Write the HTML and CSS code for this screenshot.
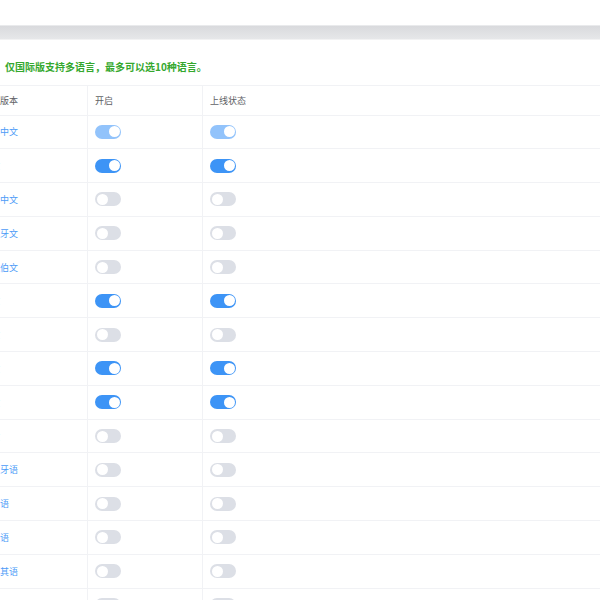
FILE: index.html
```html
<!DOCTYPE html>
<html lang="zh">
<head>
<meta charset="utf-8">
<link rel="stylesheet" href="styles.css">
</head>
<body>
<div class="topbar"></div>
<div class="shade"></div>
<div class="notice">仅国际版支持多语言，最多可以选10种语言。</div>
<div class="table">
  <div class="row head"><div class="cell">语言版本</div><div class="cell">开启</div><div class="cell">上线状态</div></div>
  <div class="row"><div class="cell link">繁体中文</div><div class="cell"><span class="sw on dis"></span></div><div class="cell"><span class="sw on dis"></span></div></div>
  <div class="row"><div class="cell link">英文</div><div class="cell"><span class="sw on"></span></div><div class="cell"><span class="sw on"></span></div></div>
  <div class="row"><div class="cell link">简体中文</div><div class="cell"><span class="sw"></span></div><div class="cell"><span class="sw"></span></div></div>
  <div class="row"><div class="cell link">西班牙文</div><div class="cell"><span class="sw"></span></div><div class="cell"><span class="sw"></span></div></div>
  <div class="row"><div class="cell link">阿拉伯文</div><div class="cell"><span class="sw"></span></div><div class="cell"><span class="sw"></span></div></div>
  <div class="row"><div class="cell link">日文</div><div class="cell"><span class="sw on"></span></div><div class="cell"><span class="sw on"></span></div></div>
  <div class="row"><div class="cell link">韩文</div><div class="cell"><span class="sw"></span></div><div class="cell"><span class="sw"></span></div></div>
  <div class="row"><div class="cell link">法文</div><div class="cell"><span class="sw on"></span></div><div class="cell"><span class="sw on"></span></div></div>
  <div class="row"><div class="cell link">德文</div><div class="cell"><span class="sw on"></span></div><div class="cell"><span class="sw on"></span></div></div>
  <div class="row"><div class="cell link">俄文</div><div class="cell"><span class="sw"></span></div><div class="cell"><span class="sw"></span></div></div>
  <div class="row"><div class="cell link">葡萄牙语</div><div class="cell"><span class="sw"></span></div><div class="cell"><span class="sw"></span></div></div>
  <div class="row"><div class="cell link">印尼语</div><div class="cell"><span class="sw"></span></div><div class="cell"><span class="sw"></span></div></div>
  <div class="row"><div class="cell link">马来语</div><div class="cell"><span class="sw"></span></div><div class="cell"><span class="sw"></span></div></div>
  <div class="row"><div class="cell link">土耳其语</div><div class="cell"><span class="sw"></span></div><div class="cell"><span class="sw"></span></div></div>
  <div class="row"><div class="cell link">意大利语</div><div class="cell"><span class="sw"></span></div><div class="cell"><span class="sw"></span></div></div>
</div>
</body>
</html>
```
FILE: styles.css
```css
html, body {
  margin: 0;
  padding: 0;
  background: #ffffff;
  overflow: hidden;
  font-family: "Noto Sans CJK SC", "Noto Sans", sans-serif;
}
.topbar {
  height: 25px;
  background: #ffffff;
}
.shade {
  height: 13px;
  background: linear-gradient(#d9dadd, #e6e7e9);
  border-top: 1px solid #e9eaec;
  border-bottom: 1px solid #f2f2f3;
}
.notice {
  height: 45px;
  box-sizing: border-box;
  padding: 20px 0 0 5px;
  font-size: 10px;
  line-height: 14px;
  font-weight: bold;
  color: #35a82e;
}
.table {
  margin-left: -25px;
  border-top: 1px solid #f1f2f5;
}
.row {
  display: grid;
  grid-template-columns: 113px 115px 1fr;
  height: 33.8px;
  box-sizing: border-box;
  border-bottom: 1px solid #f1f2f5;
}
.row.head {
  height: 29.5px;
}
.cell {
  display: flex;
  align-items: center;
  padding-left: 7px;
  font-size: 9px;
  color: #606266;
  border-right: 1px solid #f1f2f5;
  white-space: nowrap;
}
.cell:last-child {
  border-right: none;
}
.cell.link {
  color: #4d9bf7;
}
.sw {
  position: relative;
  display: inline-block;
  width: 26px;
  height: 14px;
  border-radius: 7px;
  background: #dcdfe6;
}
.sw::after {
  content: "";
  position: absolute;
  top: 1.5px;
  left: 1.5px;
  width: 11px;
  height: 11px;
  border-radius: 50%;
  background: #ffffff;
}
.sw.on {
  background: #3d94f6;
}
.sw.on::after {
  left: 13.5px;
}
.sw.on.dis {
  background: #92c3fb;
}
```
